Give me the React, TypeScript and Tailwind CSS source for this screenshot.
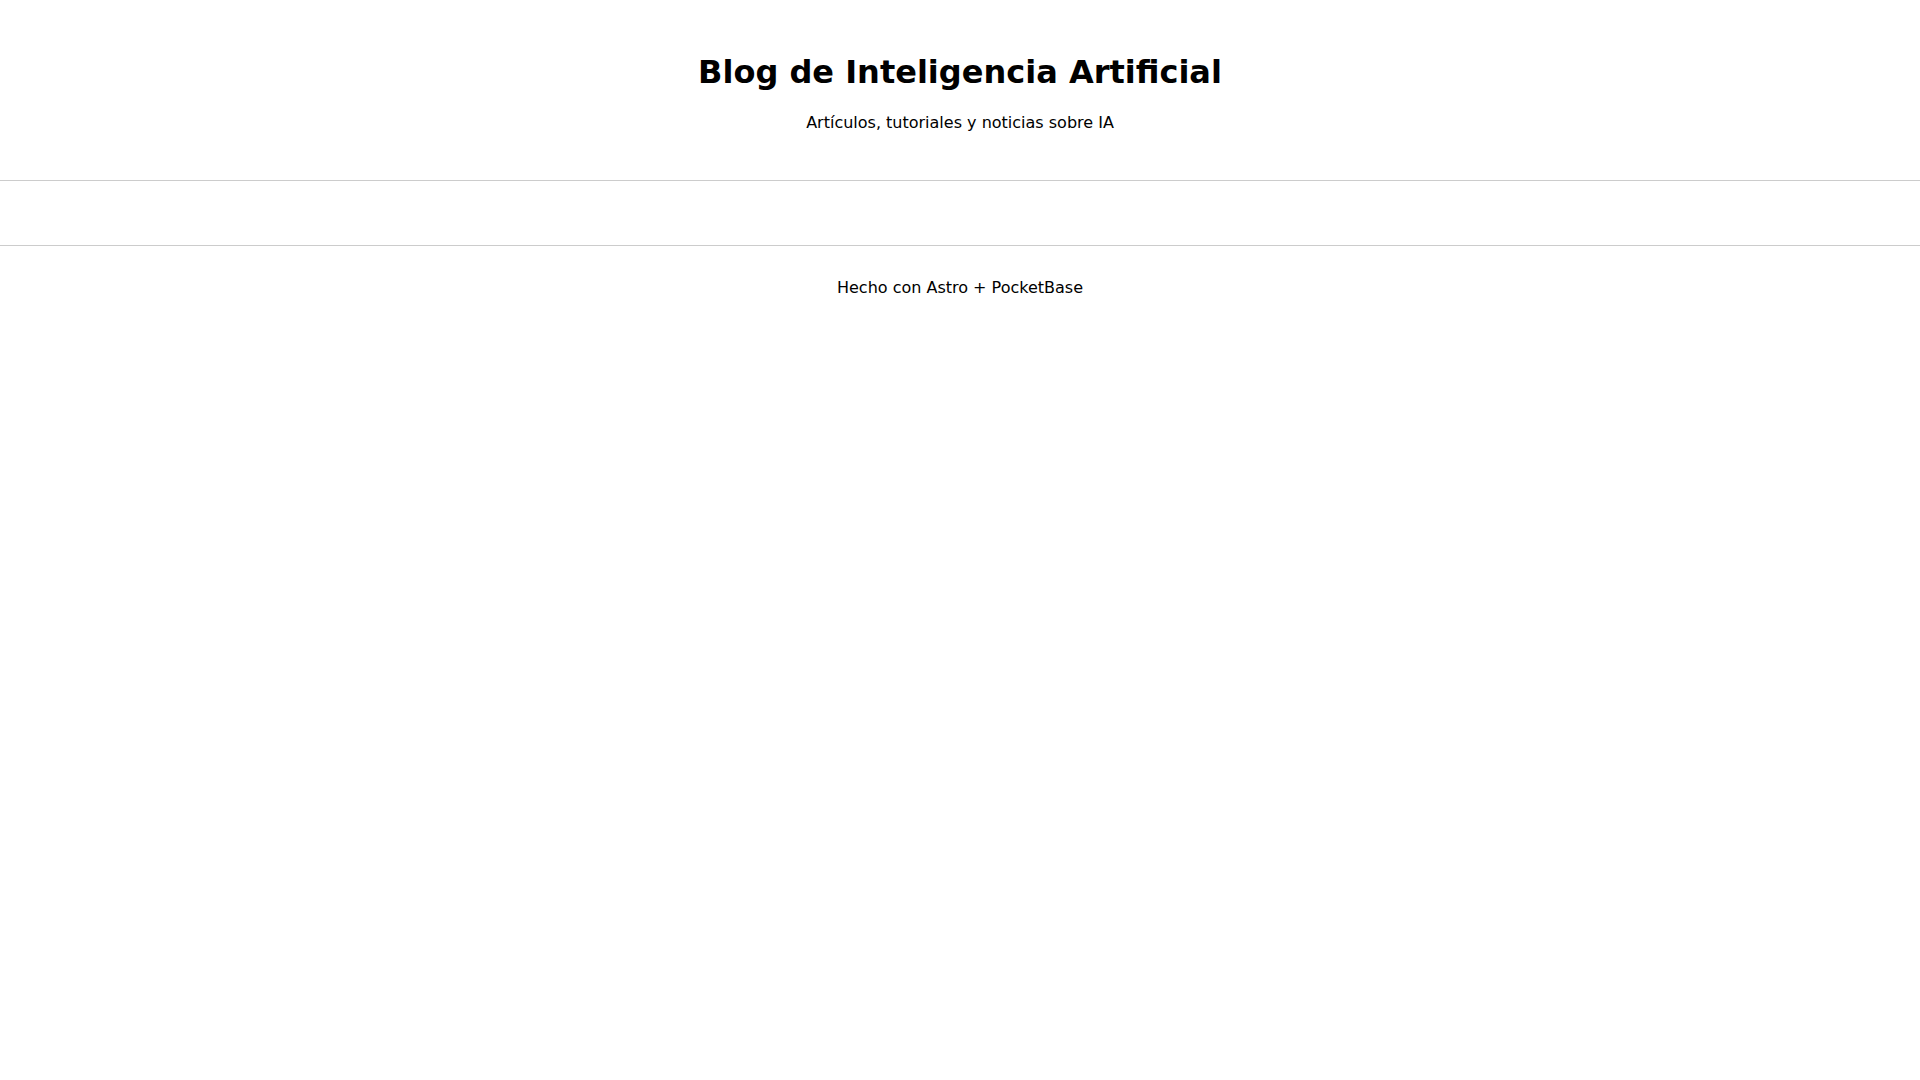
const App = () => {
  return (
    <div className="min-h-screen bg-white text-black font-['DejaVu_Sans',sans-serif]">
      {/* Header */}
      <header className="pt-[54px] pb-[48px] text-center border-b border-[#cccccc]">
        <h1 className="text-[32px] leading-[37px] font-bold">Blog de Inteligencia Artificial</h1>
        <p className="mt-[22px] text-base leading-[19px]">Artículos, tutoriales y noticias sobre IA</p>
      </header>

      {/* Posts */}
      <main className="h-[64px]" />

      {/* Footer */}
      <footer className="pt-[32px] text-center border-t border-[#cccccc]">
        <p className="text-base leading-[19px]">Hecho con Astro + PocketBase</p>
      </footer>
    </div>
  );
};

export default App;
